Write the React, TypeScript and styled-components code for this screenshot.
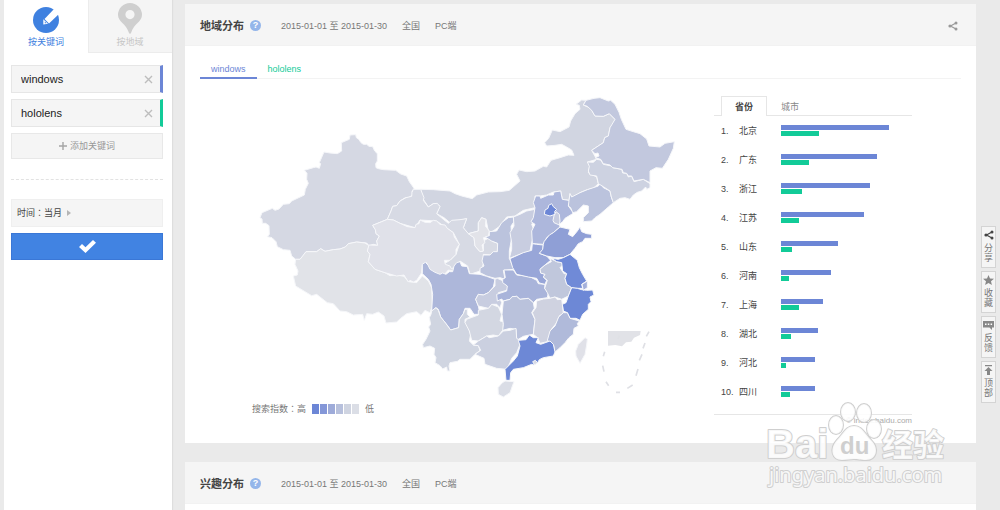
import React from "react";
import styled, { createGlobalStyle } from "styled-components";

const GlobalStyle = createGlobalStyle`
  *, *::before, *::after { box-sizing: border-box; }
  body {
    margin: 0;
    background: #eaeaea;
    color: #555;
    font: 9px/12px "Liberation Sans", "Noto Sans CJK SC", sans-serif;
  }
  button { font: inherit; color: inherit; padding: 0; cursor: pointer; }
  input { font: inherit; }
  ol, h2 { margin: 0; padding: 0; }
`;

const Page = styled.div`
  position: relative;
  display: flex;
  min-height: 100vh;
  padding-left: 4px;
  overflow: hidden;
`;

const Sidebar = styled.aside`
  flex: 0 0 168px;
  min-width: 0;
  margin-right: 13px;
  background: #fff;
  box-shadow: 1px 0 1px #dedede;
`;

const ModeTabs = styled.div`
  display: flex;
  height: 53px;
`;

const ModeTab = styled.button<{ $active?: boolean }>`
  flex: 1 1 0;
  display: flex;
  flex-direction: column;
  align-items: center;
  justify-content: flex-end;
  gap: 2px;
  padding-bottom: 5px;
  border: 0;
  background: ${(p) => (p.$active ? "#fff" : "#f5f5f5")};
  box-shadow: ${(p) => (p.$active ? "none" : "inset 1px -1px 0 #ececec")};
  color: ${(p) => (p.$active ? "#3f81e0" : "#c6c6c6")};
`;

const SideBody = styled.div`
  display: flex;
  flex-direction: column;
  gap: 6px;
  padding: 12px 9px 0 7px;
`;

const Keyword = styled.label<{ $color: string }>`
  display: flex;
  align-items: center;
  height: 28px;
  padding: 0 7px 0 9px;
  border: 1px solid #e6e6e6;
  border-right: 3px solid ${(p) => p.$color};
  background: #f5f5f5;
`;

const KeywordInput = styled.input`
  flex: 1;
  width: 0;
  min-width: 0;
  padding: 0;
  border: 0;
  outline: 0;
  background: transparent;
  color: #222;
  font-size: 11px;
`;

const IconButton = styled.button`
  display: flex;
  border: 0;
  background: none;
`;

const AddButton = styled.button`
  display: flex;
  align-items: center;
  justify-content: center;
  gap: 3px;
  height: 26px;
  border: 1px solid #e8e8e8;
  background: #f5f5f5;
  color: #999;
`;

const Dashes = styled.div`
  margin: 14px 0 13px;
  border-top: 1px dashed #e2e2e2;
`;

const TimeButton = styled.button`
  display: flex;
  align-items: center;
  gap: 5px;
  height: 28px;
  padding-left: 5px;
  border: 1px solid #efefef;
  background: #f5f5f5;
  color: #444;
`;

const Colon = styled.span`
  font-family: "Noto Sans CJK TC", sans-serif;
`;

const Submit = styled.button`
  display: flex;
  align-items: center;
  justify-content: center;
  height: 27px;
  border: 1px solid #3a77d6;
  background: #4183e2;
`;

const Main = styled.main`
  flex: 1;
  min-width: 0;
  display: flex;
  flex-direction: column;
  gap: 19px;
  padding-top: 4px;
`;

const Panel = styled.section<{ $grow?: boolean }>`
  flex: ${(p) => (p.$grow ? "1 0 auto" : "none")};
  background: #fff;
`;

const PanelHeader = styled.header`
  display: flex;
  align-items: center;
  gap: 15px;
  height: 42px;
  padding: 2px 18px 0 15px;
  border-bottom: 1px solid #f2f2f2;
  background: #f5f5f5;
  color: #777;
`;

const Title = styled.h2`
  display: flex;
  align-items: center;
  gap: 6px;
  margin-right: 5px;
  color: #444;
  font-size: 11px;
  line-height: 16px;
`;

const Help = styled.button`
  width: 11px;
  height: 11px;
  border: 0;
  border-radius: 50%;
  background: #94b6ea;
  color: #fff;
  font-size: 9px;
  font-weight: bold;
  line-height: 11px;
`;

const ShareButton = styled(IconButton)`
  margin-left: auto;
`;

const WordTabs = styled.div`
  display: flex;
  margin: 15px 15px 0;
  border-bottom: 1px solid #f3f3f3;
`;

const WordTab = styled.button<{ $color: string; $active?: boolean }>`
  height: 18px;
  margin-bottom: -1px;
  padding: 0 11px;
  border: 0;
  border-bottom: 2px solid ${(p) => (p.$active ? p.$color : "transparent")};
  background: none;
  color: ${(p) => p.$color};
`;

const Region = styled.div`
  display: grid;
  grid-template-columns: minmax(0, 1fr) 198px;
  padding: 12px 64px 16px 15px;
`;

const MapColumn = styled.div`
  padding: 0 29px 0 50px;
`;

const MapSvg = styled.svg`
  display: block;
  width: 100%;
  height: auto;
`;

const Legend = styled.div`
  display: flex;
  align-items: center;
  gap: 6px;
  padding: 2px 0 0 2px;
  color: #777;
`;

const Scale = styled.div`
  display: flex;
  gap: 1px;
`;

const Swatch = styled.span<{ $color: string }>`
  width: 7px;
  height: 10px;
  background: ${(p) => p.$color};
`;

const Ranking = styled.div`
  padding-top: 5px;
`;

const RankTabs = styled.div`
  display: flex;
  height: 20px;
  padding-left: 7px;
  border-bottom: 1px solid #e6e6e6;
`;

const RankTab = styled.button<{ $active?: boolean }>`
  width: 46px;
  height: 20px;
  border: 1px solid ${(p) => (p.$active ? "#e6e6e6" : "transparent")};
  border-bottom: 0;
  background: ${(p) => (p.$active ? "#fff" : "transparent")};
  color: ${(p) => (p.$active ? "#444" : "#888")};
  font-weight: ${(p) => (p.$active ? "bold" : "normal")};
`;

const RankList = styled.ol`
  padding: 0 0 8px 7px;
  border-bottom: 1px solid #e6e6e6;
  list-style: none;
`;

const RankRow = styled.li`
  display: grid;
  grid-template-columns: 18px 42px 1fr;
  align-items: center;
  height: 29px;
  color: #444;
`;

const Bars = styled.div`
  display: flex;
  flex-direction: column;
  gap: 1px;
`;

const Bar = styled.div<{ $color: string }>`
  height: 5px;
  background: ${(p) => p.$color};
`;

const Source = styled.div`
  color: #aaa;
  font-size: 8px;
  text-align: right;
`;

const Rail = styled.nav`
  flex: 0 0 24px;
  display: flex;
  flex-direction: column;
  gap: 3px;
  padding: 226px 4px 0 5px;
`;

const RailButton = styled.button`
  display: flex;
  flex-direction: column;
  align-items: center;
  gap: 3px;
  height: 42px;
  padding-top: 3px;
  border: 1px solid #d4d4d4;
  background: #f5f5f5;
  color: #777;
  line-height: 10px;
`;

const RailText = styled.span`
  width: 9px;
`;

const Watermark = styled.svg`
  position: absolute;
  top: 398px;
  right: 48px;
  width: 188px;
  height: 96px;
  pointer-events: none;
`;

const BLUE = "#6c86d6";
const GREEN = "#12cb98";

// Map units are a third of a pixel; each group of provinces is drawn on its own sheet.
type Shape = [number, number, string, string];

const sheets = {
  west: [0, 90],
  centre: [450, 240],
  north: [750, 0],
  south: [480, 480],
  east: [720, 300],
};

const s = (sheet: keyof typeof sheets, color: string, points: string): Shape => [
  sheets[sheet][0],
  sheets[sheet][1],
  color,
  points,
];

const provinces: Shape[] = [
  // Xinjiang
  s("west", "#d5d8e3", "300,42 317,41 319,50 326,55 333,65 340,70 350,70 357,76 368,77 374,90 382,98 382,120 377,128 378,140 385,143 400,146 437,148 452,159 470,165 478,182 492,202 486,212 488,222 475,230 466,230 450,240 440,254 428,256 423,270 412,295 395,302 368,313 376,326 378,338 388,345 380,360 383,373 370,370 357,374 350,366 320,363 295,368 286,378 270,384 250,386 225,391 212,383 200,392 168,392 160,404 150,415 137,415 125,405 120,388 100,386 82,377 78,362 66,350 52,347 58,340 57,314 47,307 37,307 36,294 30,290 36,275 67,262 75,268 87,264 100,250 118,248 125,240 163,222 166,205 175,187 170,175 171,157 163,148 190,140 198,138 208,142 212,128 208,125 222,93 240,96 262,98 275,90 274,65 298,55"),
  // Tibet
  s("west", "#e1e3e8", "137,415 150,415 168,392 200,392 212,383 225,391 250,386 270,384 286,378 295,368 320,363 345,366 357,374 352,390 360,400 355,422 375,445 405,455 420,464 440,462 462,466 475,482 500,485 517,465 535,480 545,500 547,555 540,575 525,568 513,583 500,572 470,578 452,592 440,603 408,606 402,585 385,573 368,580 350,578 343,598 338,580 310,582 290,572 270,570 250,548 232,545 200,520 185,524 165,512 137,495 130,465 142,462 144,450 135,430"),
  // Inner Mongolia
  s("north", "#d1d5e1", "-238,295 -200,296 -150,300 -135,308 -115,315 -83,323 -70,312 -35,303 0,302 28,298 60,270 50,250 57,237 80,242 105,240 130,226 140,228 153,208 180,200 205,192 222,193 215,177 200,168 185,160 165,163 140,165 134,155 146,142 157,117 180,122 207,108 212,90 225,68 240,55 238,43 228,40 245,27 258,28 250,42 272,52 285,75 310,76 328,68 345,85 342,95 330,110 325,135 314,140 310,155 275,178 290,205 262,213 270,222 265,245 290,258 295,278 280,292 262,296 240,305 225,318 215,318 210,308 207,328 187,325 182,300 160,303 140,312 120,315 105,315 105,350 70,358 62,363 45,375 20,378 0,405 -18,418 -30,425 -35,420 -42,385 -55,380 -65,395 -65,420 -95,428 -104,420 -110,410 -100,383 -150,395 -168,380 -190,368 -180,345 -200,338 -215,348 -230,325 -238,295"),
  // Gansu
  s("centre", "#d7dae4", "40,55 62,55 72,80 70,88 85,108 100,98 112,97 120,107 110,128 130,145 145,157 155,148 180,146 200,143 190,170 205,188 222,200 225,225 240,242 250,240 250,210 268,200 275,210 293,217 292,242 270,252 250,250 252,270 248,285 240,300 210,310 203,285 180,270 165,285 158,300 130,280 150,268 168,250 178,220 160,185 110,150 60,147 45,170 0,157 -20,147 -38,145 -27,120 -22,106 -10,104 0,90 18,80 35,76 36,64"),
  // Qinghai
  s("centre", "#e0e1e9", "-82,163 -55,152 -38,145 -20,147 0,157 22,167 45,170 48,160 57,158 60,147 75,154 90,155 100,148 110,150 120,160 135,162 142,172 160,185 163,198 178,220 168,235 168,250 150,268 133,268 136,280 150,285 154,293 162,290 160,300 145,297 130,314 115,312 85,295 80,275 67,280 65,305 50,328 40,333 30,328 25,333 12,312 -10,315 -45,305 -75,295 -95,272 -90,250 -98,240 -93,222 -67,223 -70,210 -62,195 -72,188 -74,176"),
  // Ningxia
  s("centre", "#e2e3e9", "205,188 235,180 235,155 245,140 258,145 256,165 268,180 265,198 250,200 255,215 246,222 250,240 240,242 225,225 222,200"),
  // Shaanxi
  s("centre", "#bbc3dd", "340,138 342,152 333,165 335,200 328,240 328,262 342,295 310,298 315,325 300,320 285,322 260,315 240,305 240,292 252,285 246,270 250,252 270,252 280,242 292,242 293,217 275,210 255,198 268,194 268,182 290,180 305,155 325,140"),
  // Shanxi
  s("centre", "#c8cde0", "340,138 360,130 380,120 405,115 410,140 395,160 405,185 395,215 390,240 360,250 328,262 335,235 335,215 330,185 342,165"),
  // Hebei
  s("east", "#adb7dc", "137,15 150,15 152,22 175,12 190,12 192,3 212,0 217,25 235,28 240,33 235,45 248,62 248,68 225,82 218,92 208,100 210,108 190,125 170,140 160,160 127,158 125,120 135,100 123,92 130,80 135,50 130,35"),
  // Tianjin
  s("east", "#c7cce0", "193,70 198,62 208,70 210,90 208,102 192,95 189,88"),
  // Beijing
  s("east", "#6c86d6", "163,70 165,57 174,52 176,43 185,38 190,47 200,55 194,61 195,70 180,75"),
  // Liaoning
  s("north", "#bbc3dd", "210,308 215,318 240,305 262,296 295,285 300,278 310,290 330,300 334,318 340,335 325,348 300,370 285,380 275,390 250,392 250,380 265,365 265,345 250,342 230,362 218,365 212,350 205,345 207,328"),
  // Jilin
  s("north", "#cdd2e1", "262,213 280,214 290,205 302,207 310,220 335,225 338,230 365,235 368,246 380,247 385,258 395,255 402,272 430,265 450,278 450,290 440,295 437,288 425,300 412,304 400,312 390,325 375,320 360,322 340,335 334,318 330,300 310,287 295,278 290,255 270,252 265,240 268,226"),
  // Heilongjiang
  s("north", "#c2c8de", "258,28 282,22 300,20 325,30 332,28 345,40 357,64 364,85 378,115 400,122 420,128 440,144 447,165 480,168 495,157 523,152 520,172 505,205 487,232 468,230 450,240 450,275 430,265 402,270 395,255 385,255 380,247 370,245 366,235 338,230 330,222 310,218 302,205 285,200 297,195 294,186 285,188 275,178 310,155 314,140 325,135 330,110 345,85 328,68 310,76 285,75 275,58 262,46 250,42"),
  // Sichuan
  s("south", "#adb7da", "37,40 46,34 54,42 60,55 75,64 90,70 98,66 108,70 118,62 128,62 132,45 140,35 150,32 155,45 172,47 178,68 210,70 230,76 255,85 250,108 235,125 220,132 205,130 197,145 205,165 210,190 192,190 180,172 165,172 160,188 148,205 146,230 122,237 108,218 92,198 85,175 78,170 65,180 68,130 63,100 55,85 37,68"),
  // Yunnan
  s("south", "#d0d5e1", "63,190 65,180 78,170 85,178 92,198 108,218 122,237 146,230 148,205 160,188 165,175 172,175 172,190 180,198 165,205 165,215 180,222 178,240 182,250 178,270 190,282 205,284 210,298 195,310 180,325 150,325 142,331 120,335 117,345 120,360 112,360 110,348 98,354 90,344 75,335 78,320 72,310 74,292 60,285 40,290 38,280 48,265 60,240 56,228 62,220 58,200"),
  // Guizhou
  s("south", "#d3d7e2", "165,215 170,205 205,192 205,178 235,172 245,160 265,168 275,190 270,210 280,212 280,235 265,255 250,252 230,255 205,270 185,268 178,240"),
  // Chongqing
  s("south", "#c8cde0", "255,85 262,82 280,90 295,108 290,118 265,125 268,138 275,155 270,170 260,160 245,160 235,172 205,165 197,145 205,130 220,132 235,125 255,105"),
  // Hubei
  s("east", "#a9b4da", "42,237 70,237 80,252 110,255 125,260 140,268 145,278 165,280 164,292 175,305 172,320 140,325 130,335 115,322 90,325 80,316 60,325 40,330 35,324 22,330 20,310 50,300 52,285 38,275 38,265 46,260"),
  // Hunan
  s("east", "#bac2dc", "40,330 60,325 66,317 80,316 90,325 115,322 130,335 133,352 125,365 135,385 130,430 118,432 100,436 80,448 78,415 60,412 38,418 40,400 36,370"),
  // Guangxi
  s("south", "#cbd0e0", "190,282 205,270 230,255 238,260 265,255 280,240 300,238 318,232 320,262 332,270 328,285 320,305 305,322 300,335 290,355 260,352 225,340 222,322 195,310 212,298 205,284"),
  // Henan
  s("east", "#98a6d8", "60,203 100,185 125,178 127,158 140,160 160,162 158,178 148,187 170,195 182,208 165,222 150,235 152,246 165,250 160,258 170,268 165,280 148,276 140,262 115,258 80,250 68,230"),
  // Shandong
  s("east", "#8f9fd6", "160,160 162,152 178,132 190,125 210,108 240,115 235,130 248,137 262,120 270,108 275,122 290,128 305,130 305,142 285,142 278,152 265,158 255,172 240,190 220,200 195,200 170,195 148,187 158,175"),
  // Anhui
  s("east", "#c0c7dc", "180,202 200,212 215,215 218,222 210,230 222,248 230,248 225,262 230,280 245,290 235,315 215,325 195,318 180,322 172,305 164,292 172,268 160,258 165,250 152,246 150,235 165,222 184,212"),
  // Jiangsu
  s("east", "#708ad7", "185,202 205,205 220,200 240,190 262,208 268,230 278,250 290,270 275,280 278,292 255,292 245,290 230,280 225,262 230,248 218,240 215,215 200,212"),
  // Zhejiang
  s("east", "#6d88d6", "245,290 262,292 275,296 290,298 308,297 312,312 300,318 303,332 295,340 295,355 278,370 270,388 258,382 240,382 232,365 220,360 217,340 228,335 235,315"),
  // Shanghai
  s("east", "#a4b0db", "276,280 292,270 292,290 280,298"),
  // Jiangxi
  s("east", "#cfd2e0", "140,330 160,324 180,322 195,318 202,326 215,325 217,340 220,368 208,374 200,395 184,415 180,430 172,452 150,457 143,440 130,430 135,385 127,365 138,350"),
  // Fujian
  s("east", "#b0bada", "220,365 232,365 240,382 268,390 262,398 265,405 252,412 250,430 237,440 225,455 210,470 195,483 190,460 172,448 180,420 195,405 206,378"),
  // Guangdong
  s("east", "#6d88d6", "85,448 108,446 118,432 130,440 145,440 138,455 152,460 180,450 190,460 195,483 190,495 160,500 148,506 143,515 132,522 125,520 100,530 70,535 62,545 60,568 48,568 45,535 70,510 82,495 90,465"),
  // Hong Kong
  s("east", "#d6d9e4", "128,512 136,508 142,514 134,522"),
  // Hainan
  s("south", "#dadde6", "264,410 276,396 285,390 312,392 306,408 300,425 280,438 265,430"),
  // Taiwan
  s("east", "#e0e1e8", "285,440 292,444 290,462 285,490 270,517 258,495 257,480 265,460"),
];

const ranks: [string, number, number][] = [
  ["北京", 108, 38],
  ["广东", 96, 28],
  ["浙江", 89, 21],
  ["江苏", 83, 18],
  ["山东", 57, 11],
  ["河南", 50, 8],
  ["上海", 42, 18],
  ["湖北", 37, 10],
  ["河北", 34, 5],
  ["四川", 34, 9],
];

const scale = ["#6c86d6", "#8497d8", "#9eabd9", "#b7c0dc", "#cfd4e1", "#dbdee6"];

const ShareIcon = ({ color = "#999" }: { color?: string }) => (
  <svg width="10" height="10" viewBox="0 0 10 10" aria-hidden="true">
    <path d="M8 2 2.5 5 8 8" fill="none" stroke={color} strokeWidth="1.2" />
    <circle cx="8" cy="2" r="1.5" fill={color} />
    <circle cx="2" cy="5" r="1.6" fill={color} />
    <circle cx="8" cy="8" r="1.5" fill={color} />
  </svg>
);

const StarIcon = () => (
  <svg width="11" height="10" viewBox="0 0 11 10" aria-hidden="true">
    <path d="M5.5 0 7 3.4l4 .4-3 2.5.9 3.7-3.4-2L2.1 10 3 6.3 0 3.8l4-.4z" fill="#888" />
  </svg>
);

const CommentIcon = () => (
  <svg width="11" height="10" viewBox="0 0 11 10" aria-hidden="true">
    <path d="M0 1h11v6.5H9V10L6.5 7.5H0z" fill="#888" />
    <path d="M2 3.500h1.500V5H2zm2.800 0h1.500V5H4.800zm2.800 0h1.500V5H7.600z" fill="#fff" />
  </svg>
);

const TopIcon = () => (
  <svg width="9" height="10" viewBox="0 0 9 10" aria-hidden="true">
    <path d="M1 0h7v1.2H1zM4.5 2l4 4H6v4H3V6H.5z" fill="#888" />
  </svg>
);

const railItems: [string, React.ReactNode][] = [
  ["分享", <ShareIcon color="#444" />],
  ["收藏", <StarIcon />],
  ["反馈", <CommentIcon />],
  ["顶部", <TopIcon />],
];

const Header = ({ title, children }: { title: string; children?: React.ReactNode }) => (
  <PanelHeader>
    <Title>
      {title}
      <Help aria-label="帮助">?</Help>
    </Title>
    <span>2015-01-01 至 2015-01-30</span>
    <span>全国</span>
    <span>PC端</span>
    {children}
  </PanelHeader>
);

const KeywordBox = ({ value, color }: { value: string; color: string }) => (
  <Keyword $color={color}>
    <KeywordInput defaultValue={value} aria-label="关键词" />
    <IconButton aria-label="删除">
      <svg width="9" height="9" viewBox="0 0 9 9">
        <path d="m1 1 7 7m0-7L1 8" stroke="#bdbdbd" strokeWidth="1.4" />
      </svg>
    </IconButton>
  </Keyword>
);

const ChinaMap = () => (
  <MapSvg viewBox="0 0 1305 930" role="img" aria-label="地域分布">
    <g stroke="#f6f7fa" strokeWidth="3" strokeLinejoin="round">
      {provinces.map(([x, y, color, points], i) => (
        <polygon key={i} points={points} fill={color} transform={`translate(${x} ${y})`} />
      ))}
    </g>
    <path d="M1074 720h98l-2 12-18 8-8 12-16 2-12 12-20-4-22 2z" fill="#e1e2e7" />
    <path
      d="M1197 722l-8 14m-4 20-6 16m-3 18-8 18m-4 26-6 20m-10 28-16 10m-22 12h-12m-22-20-8-12m-6-30-4-18m2-28 4-14m44-48-4 10"
      fill="none"
      stroke="#dfe0e5"
      strokeWidth="5"
    />
  </MapSvg>
);

export default function App() {
  return (
    <>
      <GlobalStyle />
      <Page>
        <Sidebar>
          <ModeTabs>
            <ModeTab $active>
              <svg width="28" height="28" viewBox="0 0 28 28" aria-hidden="true">
                <circle cx="14" cy="14" r="13" fill="#3f81e0" />
                <path d="M23 2 28 7 17 17.5 12.5 13z" fill="#fff" />
                <path d="M11.3 13.3 16 17.8 11.3 18.5z" fill="#fff" />
                <path d="M12.8 15.5v1.7h1.7z" fill="#3f81e0" />
              </svg>
              按关键词
            </ModeTab>
            <ModeTab>
              <svg width="28" height="31" viewBox="0 0 28 31" aria-hidden="true">
                <path
                  fillRule="evenodd"
                  d="M14 0a12 12 0 0 1 12 12c0 7-8 8-11 18l-1 1-1-1C10 20 2 19 2 12A12 12 0 0 1 14 0zm0 7a4.600 4.600 0 1 0 0 9.200A4.600 4.600 0 0 0 14 7z"
                  fill="#cfcfcf"
                />
              </svg>
              按地域
            </ModeTab>
          </ModeTabs>
          <SideBody>
            <KeywordBox value="windows" color={BLUE} />
            <KeywordBox value="hololens" color={GREEN} />
            <AddButton>
              <svg width="8" height="8" viewBox="0 0 8 8" aria-hidden="true">
                <path d="M4 0v8M0 4h8" stroke="#a5a5a5" strokeWidth="1.4" />
              </svg>
              添加关键词
            </AddButton>
            <Dashes />
            <TimeButton>
              <span>
                时间<Colon>：</Colon>当月
              </span>
              <svg width="4" height="6" viewBox="0 0 4 6" aria-hidden="true">
                <path d="M0 0v6l4-3z" fill="#b5b5b5" />
              </svg>
            </TimeButton>
            <Submit aria-label="确定">
              <svg width="17" height="13" viewBox="0 0 17 13">
                <path d="M0 7 3 4l3.500 3.200L14 0l3 2.800L6.500 13z" fill="#fff" />
              </svg>
            </Submit>
          </SideBody>
        </Sidebar>

        <Main>
          <Panel>
            <Header title="地域分布">
              <ShareButton aria-label="分享">
                <ShareIcon />
              </ShareButton>
            </Header>
            <WordTabs>
              <WordTab $color={BLUE} $active>
                windows
              </WordTab>
              <WordTab $color={GREEN}>hololens</WordTab>
            </WordTabs>
            <Region>
              <MapColumn>
                <ChinaMap />
                <Legend>
                  <span>
                    搜索指数<Colon>：</Colon>高
                  </span>
                  <Scale>
                    {scale.map((c) => (
                      <Swatch key={c} $color={c} />
                    ))}
                  </Scale>
                  低
                </Legend>
              </MapColumn>
              <Ranking>
                <RankTabs>
                  <RankTab $active>省份</RankTab>
                  <RankTab>城市</RankTab>
                </RankTabs>
                <RankList>
                  {ranks.map(([name, a, b], i) => (
                    <RankRow key={name}>
                      <span>{i + 1}.</span>
                      <span>{name}</span>
                      <Bars>
                        <Bar $color={BLUE} style={{ width: a }} />
                        <Bar $color={GREEN} style={{ width: b }} />
                      </Bars>
                    </RankRow>
                  ))}
                </RankList>
                <Source>© index.baidu.com</Source>
              </Ranking>
            </Region>
          </Panel>
          <Panel $grow>
            <Header title="兴趣分布" />
          </Panel>
        </Main>

        <Rail>
          {railItems.map(([text, icon]) => (
            <RailButton key={text}>
              {icon}
              <RailText>{text}</RailText>
            </RailButton>
          ))}
        </Rail>

        <Watermark viewBox="764 398 188 96" aria-hidden="true">
          <g
            fill="#fff"
            fillOpacity="0.85"
            stroke="#cfcfcf"
            strokeWidth="2"
            strokeLinejoin="round"
            paintOrder="stroke"
          >
            <ellipse cx="836" cy="425" rx="7" ry="9" />
            <ellipse cx="848" cy="412" rx="7" ry="9" />
            <ellipse cx="864" cy="413" rx="7" ry="9" />
            <ellipse cx="874" cy="429" rx="7" ry="9" />
            <path d="M854 426c8 0 11 8 17 14 9 9 5 20-5 20-6 0-8-1-12-1s-7 1-12 1c-10 0-13-11-5-20 6-6 9-14 17-14z" />
            <text x="766" y="458" fontFamily="Liberation Sans, sans-serif" fontWeight="bold" fontSize="40">
              Bai
            </text>
            <text x="882" y="456" fontFamily="Noto Sans CJK SC, sans-serif" fontWeight="bold" fontSize="31">
              经验
            </text>
            <text x="769" y="482" fontFamily="Noto Sans, sans-serif" fontSize="20">
              jingyan.baidu.com
            </text>
          </g>
          <text
            x="840"
            y="454"
            fill="#cfcfcf"
            fontFamily="Liberation Sans, sans-serif"
            fontWeight="bold"
            fontSize="24"
          >
            du
          </text>
        </Watermark>
      </Page>
    </>
  );
}
